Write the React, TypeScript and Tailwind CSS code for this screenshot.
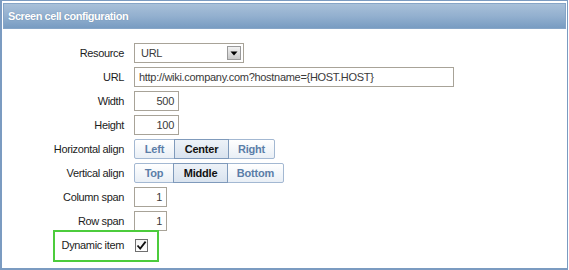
import React from 'react';

const font = { fontFamily: '"Liberation Sans", Arial, sans-serif' };

const Field = ({ label, children }: { label: string; children: React.ReactNode }) => (
    <div className="flex items-center h-[20px]">
        <div className="w-[121px] text-right text-[11px] tracking-[-0.35px] text-[#1c1c1c]">{label}</div>
        <div className="ml-[10px] flex items-center">{children}</div>
    </div>
);

const TextBox = ({ value, w, right }: { value: string; w: string; right?: boolean }) => (
    <div className={`${w} h-[20px] border border-[#a8a398] bg-white flex items-center px-[4px] text-[11px] tracking-[-0.3px] text-[#3a3a3a] ${right ? 'justify-end' : ''}`}>
        {value}
    </div>
);

const Segmented = ({ items, active, widths }: { items: string[]; active: string; widths: string[] }) => (
    <div className="flex h-[20px]">
        {items.map((it, i) => {
            const on = it === active;
            return (
                <div
                    key={it}
                    className={`${widths[i]} h-[20px] flex items-center justify-center text-[11px] tracking-[-0.2px] font-bold border ${i > 0 ? '-ml-px' : ''} ${
                        on
                            ? 'relative z-10 border-[#7f9abb] bg-gradient-to-b from-[#edf2f8] to-[#d9e3ef] text-[#111]'
                            : 'border-[#a3b8d2] bg-gradient-to-b from-[#ffffff] to-[#e9eff6] text-[#5b7ea8]'
                    } ${i === 0 ? 'rounded-l-[2px]' : ''} ${i === items.length - 1 ? 'rounded-r-[2px]' : ''}`}
                >
                    {it}
                </div>
            );
        })}
    </div>
);

export default function App() {
    return (
        <div className="w-[569px] h-[270px] bg-white" style={font}>
            <div className="relative w-[568px] h-[270px] border-t border-r border-l-2 border-b-2 border-[#7b9bc1] pt-[2px] pl-[1px] pr-[1px]">
                {/* Header */}
                <div className="h-[26px] bg-gradient-to-b from-[#a8c0d9] via-[#93b0cf] to-[#789cc2] border border-[#86a5c7] flex items-center pl-[4px]">
                    <span className="text-white text-[11px] font-bold tracking-[-0.45px] [text-shadow:0_0_1px_rgba(60,90,130,0.5)]">Screen cell configuration</span>
                </div>

                {/* Form */}
                <div className="mt-[14px] flex flex-col gap-[4px]">
                    <Field label="Resource">
                        <div className="w-[110px] h-[20px] border border-[#a8a398] bg-white flex items-center justify-between pl-[6px] pr-[1px] text-[11px] tracking-[-0.3px] text-[#3a3a3a]">
                            <span>URL</span>
                            <div className="w-[14px] h-[14px] bg-gradient-to-b from-[#f2f2f2] to-[#c9c9c9] border border-[#9a9a9a] flex items-center justify-center mr-[1px]">
                                <svg width="8" height="5" viewBox="0 0 8 5">
                                    <path d="M0.5 0.5 L7.5 0.5 L4 4.5 Z" fill="#000" />
                                </svg>
                            </div>
                        </div>
                    </Field>
                    <Field label="URL">
                        <TextBox value="http://wiki.company.com?hostname={HOST.HOST}" w="w-[320px]" />
                    </Field>
                    <Field label="Width">
                        <TextBox value="500" w="w-[45px]" right />
                    </Field>
                    <Field label="Height">
                        <TextBox value="100" w="w-[45px]" right />
                    </Field>
                    <Field label="Horizontal align">
                        <Segmented items={['Left', 'Center', 'Right']} active="Center" widths={['w-[41px]', 'w-[55px]', 'w-[47px]']} />
                    </Field>
                    <Field label="Vertical align">
                        <Segmented items={['Top', 'Middle', 'Bottom']} active="Middle" widths={['w-[40px]', 'w-[55px]', 'w-[57px]']} />
                    </Field>
                    <Field label="Column span">
                        <TextBox value="1" w="w-[33px]" right />
                    </Field>
                    <Field label="Row span">
                        <TextBox value="1" w="w-[33px]" right />
                    </Field>
                    <Field label="Dynamic item">
                        <div className="ml-[1px] w-[13px] h-[13px] border border-[#6f6f6f] bg-gradient-to-b from-[#f4f4f4] to-[#ffffff] flex items-center justify-center">
                            <svg width="11" height="11" viewBox="0 0 11 11">
                                <path d="M1.5 5.5 L4.2 8.6 L9.6 1.6" fill="none" stroke="#111" strokeWidth="1.8" />
                            </svg>
                        </div>
                    </Field>
                </div>

                {/* Highlight frame */}
                <div className="absolute left-[51px] top-[229px] w-[106px] h-[32px] border-2 border-[#4ccc3c]" />
            </div>
        </div>
    );
}
